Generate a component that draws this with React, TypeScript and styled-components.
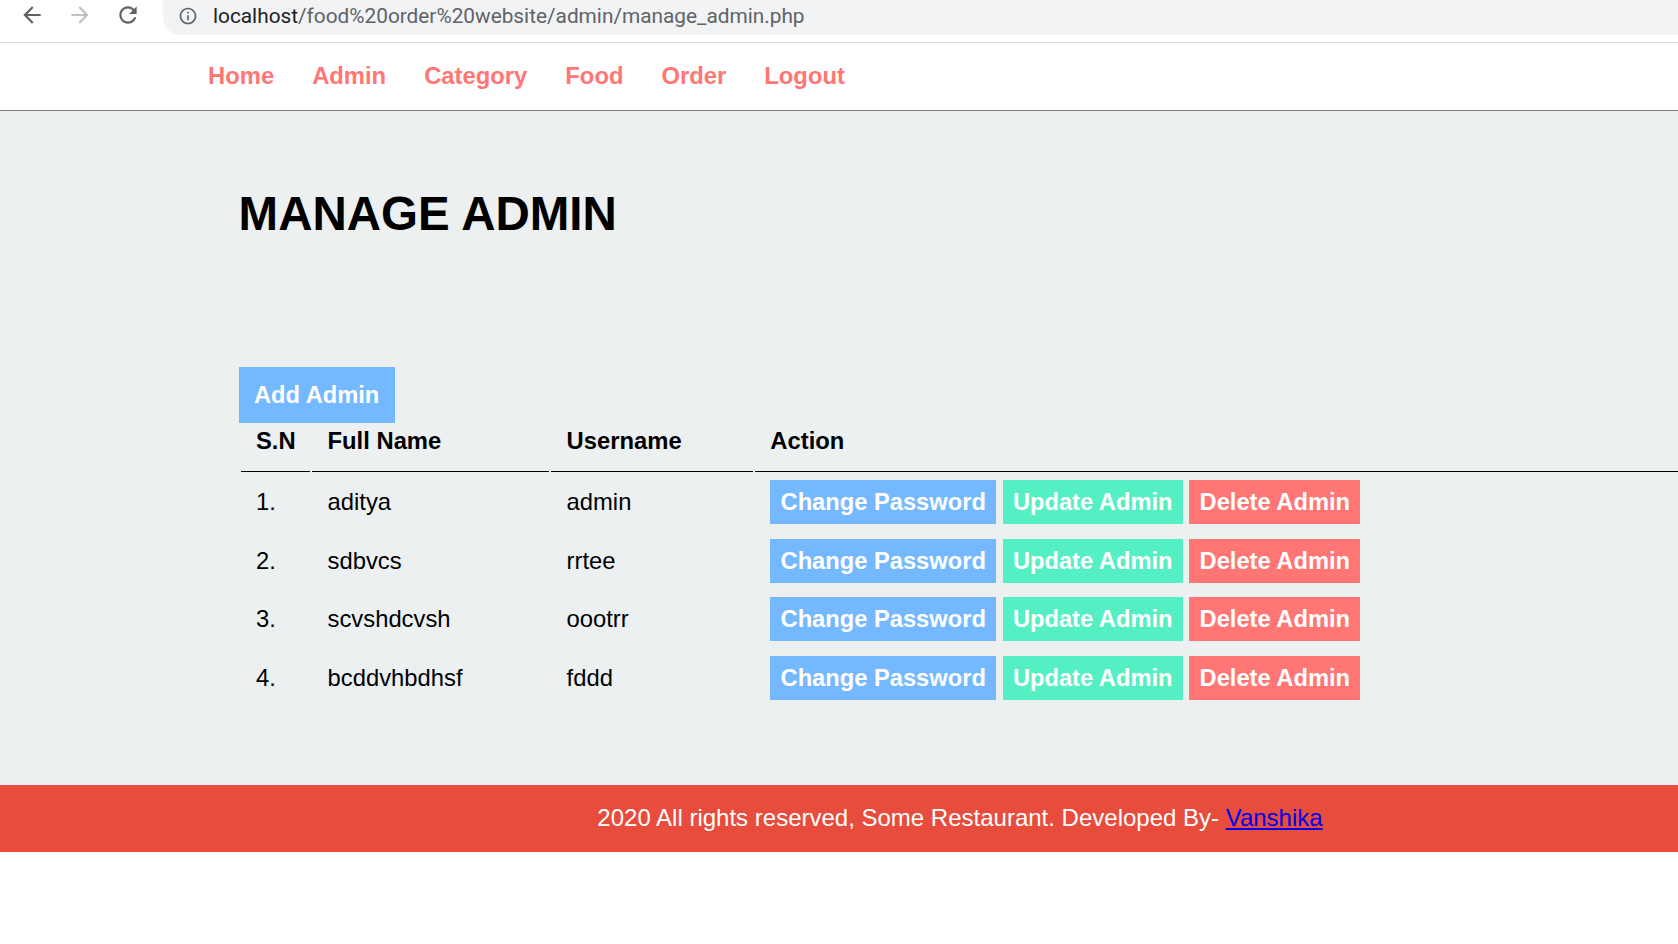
import React from "react";
import styled, { createGlobalStyle } from "styled-components";

const GlobalStyle = createGlobalStyle`
  * { margin: 0; padding: 0; }
  html, body { background: #ffffff; overflow-x: hidden; }
  body { font-family: "Liberation Sans", Arial, Helvetica, sans-serif; color: #000; }
`;

const Page = styled.div`
  width: 100%;
  overflow: hidden;
`;

/* ---------- browser chrome ---------- */
const BrowserBar = styled.div`
  height: 42px;
  border-bottom: 1px solid #dadce0;
  background: #ffffff;
  display: flex;
  align-items: flex-start;
`;

const NavButtons = styled.div`
  display: flex;
  align-items: center;
  gap: 22px;
  height: 30px;
  padding-left: 19px;
  padding-right: 22px;
`;

const IconBox = styled.span<{ $dim?: boolean }>`
  display: flex;
  width: 26px;
  height: 26px;
  color: ${(p) => (p.$dim ? "#bdc1c6" : "#5f6368")};
`;

const Omnibox = styled.div`
  flex: 1;
  height: 31px;
  padding-bottom: 4px;
  background: #f1f3f4;
  border-bottom-left-radius: 18px;
  display: flex;
  align-items: center;
  padding-left: 15px;
  gap: 15px;
`;

const InfoBox = styled.span`
  display: flex;
  width: 20px;
  height: 20px;
  color: #5f6368;
`;

const Url = styled.div`
  font-family: Roboto, "Noto Sans", sans-serif;
  font-size: 20.8px;
  color: #5f6368;
  white-space: nowrap;
`;

const Host = styled.span`
  color: #202124;
`;

/* ---------- site menu ---------- */
const Menu = styled.nav`
  height: 66px;
  padding-bottom: 1px;
  border-bottom: 1px solid grey;
  background: #ffffff;
  display: flex;
  align-items: center;
  gap: 38px;
  padding-left: 208px;
`;

const MenuLink = styled.a`
  font-size: 23.8px;
  font-weight: bold;
  color: #ff7675;
  text-decoration: none;
`;

/* ---------- main content ---------- */
const Main = styled.main`
  background: #ecf0f1;
  padding: 75.3px 0 76px 238.6px;
  overflow: hidden;
`;

const Title = styled.h1`
  font-size: 47.5px;
  font-weight: bold;
  line-height: normal;
`;

const ButtonLine = styled.div`
  margin-top: 139.2px;
  line-height: 31px;
  font-size: 23.7px;
`;

const AddButton = styled.a`
  background: #74b9ff;
  color: #ffffff;
  font-weight: bold;
  padding: 15px 15.3px;
  text-decoration: none;
`;

const Table = styled.table`
  width: 1536px;
  border-spacing: 2px;
  table-layout: fixed;
  font-size: 23.8px;
  line-height: 26.8px;
`;

const HeadCell = styled.th<{ $w?: number }>`
  box-sizing: border-box;
  width: ${(p) => (p.$w ? `${p.$w}px` : "auto")};
  text-align: left;
  font-weight: bold;
  padding: 15px 15.36px 15.5px;
  border-bottom: 1px solid #000;
`;

const Cell = styled.td`
  padding: 15px 15.36px;
  white-space: nowrap;
`;

const toneColors = {
  primary: "#74b9ff",
  secondary: "#55efc4",
  danger: "#ff7675",
};

const ActionButton = styled.a<{ $tone: keyof typeof toneColors }>`
  background: ${(p) => toneColors[p.$tone]};
  color: #ffffff;
  font-weight: bold;
  font-size: 23.7px;
  padding: 9px 10.2px;
  text-decoration: none;
`;

/* ---------- footer ---------- */
const Footer = styled.footer`
  background: #e74c3c;
  height: 67px;
  display: flex;
  align-items: center;
  justify-content: center;
  padding-left: 242px;
  color: #ffffff;
  font-size: 24px;
  white-space: nowrap;
`;

const FooterLink = styled.a`
  color: #0000ee;
  text-decoration: underline;
`;

/* ---------- icons ---------- */
const BackIcon = () => (
  <svg viewBox="0 0 24 24" width="26" height="26" fill="currentColor">
    <path d="M20 11H7.83l5.59-5.59L12 4l-8 8 8 8 1.41-1.41L7.83 13H20v-2z" />
  </svg>
);
const ForwardIcon = () => (
  <svg viewBox="0 0 24 24" width="26" height="26" fill="currentColor">
    <path d="M12 4l-1.41 1.41L16.17 11H4v2h12.17l-5.58 5.59L12 20l8-8z" />
  </svg>
);
const ReloadIcon = () => (
  <svg viewBox="0 0 24 24" width="26" height="26" fill="currentColor">
    <path d="M17.65 6.35C16.2 4.9 14.21 4 12 4c-4.42 0-7.99 3.58-7.99 8s3.57 8 7.99 8c3.73 0 6.84-2.55 7.73-6h-2.08c-.82 2.33-3.04 4-5.65 4-3.31 0-6-2.69-6-6s2.69-6 6-6c1.66 0 3.14.69 4.22 1.78L13 11h7V4l-2.35 2.35z" />
  </svg>
);
const InfoIcon = () => (
  <svg viewBox="0 0 24 24" width="20" height="20" fill="currentColor">
    <path d="M11 7h2v2h-2zm0 4h2v6h-2zm1-9C6.48 2 2 6.48 2 12s4.48 10 10 10 10-4.48 10-10S17.52 2 12 2zm0 18c-4.41 0-8-3.59-8-8s3.59-8 8-8 8 3.59 8 8-3.59 8-8 8z" />
  </svg>
);

const admins = [
  { sn: "1.", name: "aditya", user: "admin" },
  { sn: "2.", name: "sdbvcs", user: "rrtee" },
  { sn: "3.", name: "scvshdcvsh", user: "oootrr" },
  { sn: "4.", name: "bcddvhbdhsf", user: "fddd" },
];

const menuItems = ["Home", "Admin", "Category", "Food", "Order", "Logout"];

export default function App() {
  return (
    <Page>
      <GlobalStyle />
      <BrowserBar>
        <NavButtons>
          <IconBox>
            <BackIcon />
          </IconBox>
          <IconBox $dim>
            <ForwardIcon />
          </IconBox>
          <IconBox>
            <ReloadIcon />
          </IconBox>
        </NavButtons>
        <Omnibox>
          <InfoBox>
            <InfoIcon />
          </InfoBox>
          <Url>
            <Host>localhost</Host>/food%20order%20website/admin/manage_admin.php
          </Url>
        </Omnibox>
      </BrowserBar>

      <Menu>
        {menuItems.map((m) => (
          <MenuLink key={m} href="#">
            {m}
          </MenuLink>
        ))}
      </Menu>

      <Main>
        <Title>MANAGE ADMIN</Title>
        <ButtonLine>
          <AddButton href="#">Add Admin</AddButton>
        </ButtonLine>
        <Table>
          <thead>
            <tr>
              <HeadCell $w={69.6}>S.N</HeadCell>
              <HeadCell $w={237}>Full Name</HeadCell>
              <HeadCell $w={201.8}>Username</HeadCell>
              <HeadCell>Action</HeadCell>
            </tr>
          </thead>
          <tbody>
            {admins.map((a) => (
              <tr key={a.sn}>
                <Cell>{a.sn}</Cell>
                <Cell>{a.name}</Cell>
                <Cell>{a.user}</Cell>
                <Cell>
                  <ActionButton $tone="primary" href="#">
                    Change Password
                  </ActionButton>{" "}
                  <ActionButton $tone="secondary" href="#">
                    Update Admin
                  </ActionButton>{" "}
                  <ActionButton $tone="danger" href="#">
                    Delete Admin
                  </ActionButton>
                </Cell>
              </tr>
            ))}
          </tbody>
        </Table>
      </Main>

      <Footer>
        <span>
          2020 All rights reserved, Some Restaurant. Developed By-{" "}
          <FooterLink href="#">Vanshika</FooterLink>
        </span>
      </Footer>
    </Page>
  );
}
